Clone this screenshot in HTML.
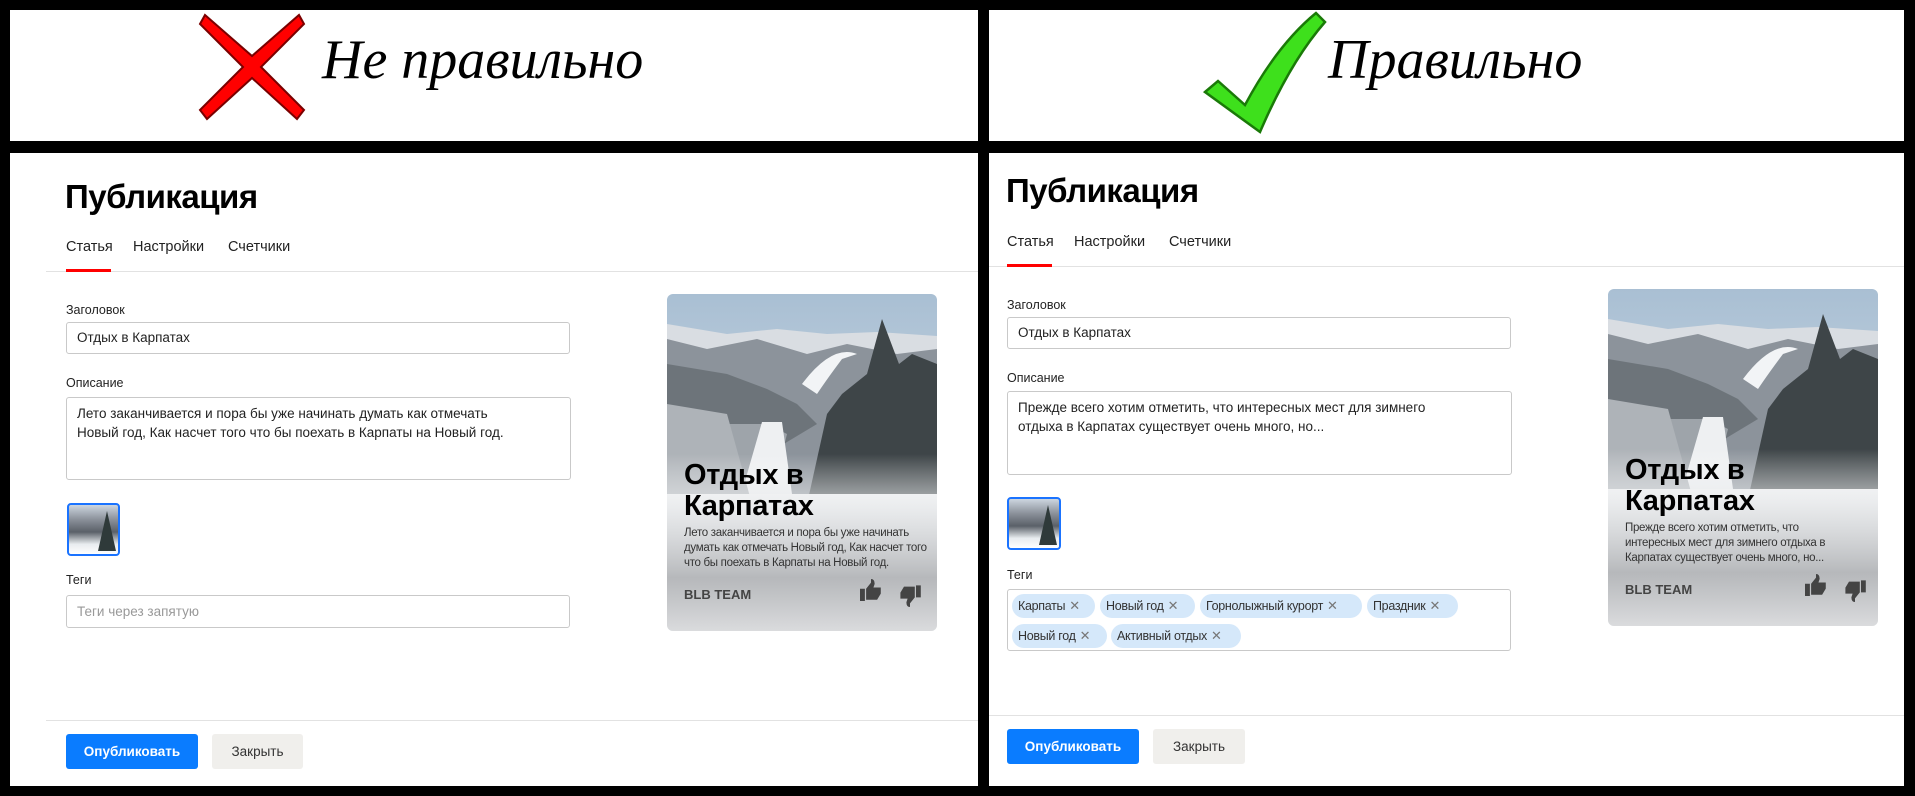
<!DOCTYPE html>
<html><head><meta charset="utf-8">
<style>
*{margin:0;padding:0;box-sizing:border-box}
body{width:1915px;height:796px;background:#000;position:relative;overflow:hidden;font-family:"Liberation Sans","DejaVu Sans",sans-serif;color:#000}
.a{position:absolute}
.wb{position:absolute;background:#fff}
.h1{font-size:33px;font-weight:bold;letter-spacing:-0.5px}
.tab{font-size:14.5px;color:#222}
.lbl{font-size:12.5px;color:#222}
.inp{position:absolute;border:1px solid #c9c9c9;border-radius:3px;background:#fff;font-size:13.5px;color:#222;padding-left:10px}
.btn{position:absolute;height:35px;border-radius:3px;font-size:13.5px;line-height:35px;text-align:center}
.card{position:absolute;width:270px;height:337px;border-radius:6px;overflow:hidden}
.ct{position:absolute;left:17px;font-size:29px;font-weight:bold;line-height:31px;letter-spacing:-0.3px;color:#000}
.cd{position:absolute;left:17px;font-size:11.5px;line-height:15px;color:#333;width:250px;letter-spacing:-0.3px}
.blb{position:absolute;left:17px;font-size:13px;font-weight:bold;color:#444}
.chip{position:absolute;height:24px;line-height:24px;border-radius:12px;background:#d5e8fa;font-size:12.5px;color:#333;padding-left:6px;letter-spacing:-0.3px;white-space:nowrap}
.chip b{font-weight:normal;color:#777;margin-left:4px;font-size:13px}
.hand{font-family:"Liberation Serif",serif;font-style:italic;font-size:56px;color:#000}
</style></head><body>

<div class="wb" style="left:10px;top:10px;width:968px;height:131px"></div>
<div class="wb" style="left:989px;top:10px;width:915px;height:131px"></div>
<div class="wb" style="left:10px;top:153px;width:968px;height:633px"></div>
<div class="wb" style="left:989px;top:153px;width:915px;height:633px"></div>

<svg class="a" style="left:197px;top:12px" width="110" height="110" viewBox="0 0 110 110">
<path d="M8 3 L55 44 L102 3 L107 12 L64 55 L107 98 L100 107 L55 66 L10 107 L3 98 L46 55 L3 12 Z" fill="#f00" stroke="#7a0000" stroke-width="2"/>
</svg>
<div class="a hand" style="left:322px;top:28px">Не правильно</div>

<svg class="a" style="left:1202px;top:10px" width="126" height="126" viewBox="0 0 126 126">
<path d="M3 82 L16 71 L43 95 Q75 35 114 3 L123 12 Q88 52 58 122 Z" fill="#3ee01c" stroke="#1a7a08" stroke-width="2.5"/>
</svg>
<div class="a hand" style="left:1328px;top:28px">Правильно</div>

<!-- LEFT PANEL -->
<div class="a h1" style="left:65px;top:178px">Публикация</div>
<div class="a tab" style="left:66px;top:239px">Статья</div>
<div class="a tab" style="left:133px;top:239px">Настройки</div>
<div class="a tab" style="left:228px;top:239px">Счетчики</div>
<div class="a" style="left:46px;top:271px;width:932px;height:1px;background:#e2e2e2"></div>
<div class="a" style="left:66px;top:269px;width:45px;height:3px;background:#f00"></div>

<div class="a lbl" style="left:66px;top:303px">Заголовок</div>
<div class="inp" style="left:66px;top:322px;width:504px;height:32px;line-height:30px">Отдых в Карпатах</div>
<div class="a lbl" style="left:66px;top:376px">Описание</div>
<div class="inp" style="left:66px;top:397px;width:505px;height:83px;line-height:19px;padding-top:6px">Лето заканчивается и пора бы уже начинать думать как отмечать<br>Новый год, Как насчет того что бы поехать в Карпаты на Новый год.</div>
<div class="a" style="left:67px;top:503px;width:53px;height:53px;border:2px solid #1a73ff;border-radius:4px;overflow:hidden;background:linear-gradient(#cdd6e0 0,#8a9099 30%,#5a6068 55%,#e8ecef 80%,#fff 100%)"><div class="a" style="right:2px;top:6px;width:18px;height:40px;background:#2f3a3a;clip-path:polygon(50% 0,100% 100%,0 100%)"></div></div>
<div class="a lbl" style="left:66px;top:573px">Теги</div>
<div class="inp" style="left:66px;top:595px;width:504px;height:33px;line-height:31px;color:#999">Теги через запятую</div>

<div class="a" style="left:46px;top:720px;width:932px;height:1px;background:#e2e2e2"></div>
<div class="btn" style="left:66px;top:734px;width:132px;background:#0a7cff;color:#fff;font-weight:bold">Опубликовать</div>
<div class="btn" style="left:212px;top:734px;width:91px;background:#f0efec;color:#333">Закрыть</div>

<div class="card" style="left:667px;top:294px">
<svg width="270" height="337" viewBox="0 0 270 337" preserveAspectRatio="none" style="position:absolute;left:0;top:0">
<defs>
<linearGradient id="sk" x1="0" y1="0" x2="0" y2="1"><stop offset="0" stop-color="#a9bfd3"/><stop offset="1" stop-color="#e4eaf0"/></linearGradient>
<linearGradient id="fd" x1="0" y1="0" x2="0" y2="1"><stop offset="0" stop-color="#fff" stop-opacity="0"/><stop offset="0.3" stop-color="#e6e8ea" stop-opacity="0.7"/><stop offset="0.7" stop-color="#b3b5b8" stop-opacity="0.95"/><stop offset="1" stop-color="#dadbdd"/></linearGradient>
</defs>
<rect width="270" height="337" fill="url(#sk)"/>
<path d="M0 30 L60 40 L110 35 L160 40 L210 38 L270 42 L270 220 L0 220Z" fill="#d9dde2"/>
<path d="M0 45 L40 55 L90 45 L140 60 L180 50 L230 60 L270 55 L270 220 L0 220Z" fill="#8c939b"/>
<path d="M0 70 L60 80 L100 95 L130 110 L150 130 L0 220Z" fill="#6d747a"/>
<path d="M135 90 Q165 50 190 60 L175 65 Q160 85 150 100Z" fill="#f2f4f6"/>
<path d="M0 130 L100 130 L120 140 L100 220 L0 220Z" fill="#9ea4aa"/>
<path d="M95 128 L115 128 L125 200 L70 215 Z" fill="#eef0f2"/>
<path d="M140 210 L160 120 L175 100 L200 80 L215 25 L232 70 L245 60 L270 70 L270 210Z" fill="#3e4548"/>
<path d="M0 110 L60 120 L85 210 L0 210Z" fill="#aeb3b8"/>
<rect y="200" width="270" height="137" fill="#f4f5f6"/>
<rect y="160" width="270" height="177" fill="url(#fd)"/>
</svg>
<div class="ct" style="top:166px">Отдых в<br>Карпатах</div>
<div class="cd" style="top:232px;width:250px">Лето заканчивается и пора бы уже начинать думать как отмечать Новый год, Как насчет того что бы поехать в Карпаты на Новый год.</div>
<div class="blb" style="top:293px">BLB TEAM</div>
<svg class="a" style="left:193px;top:285px" width="22" height="22" viewBox="0 0 18 18"><path d="M0 8h4v10H0z M5 8 L9 3 L9 0 Q12 0 12 4 L11 7 H17 L17 12 L14 17 H5Z" fill="#444"/></svg>
<svg class="a" style="left:232px;top:289px" width="22" height="24" viewBox="0 0 18 20"><g transform="rotate(180 9 10)"><path d="M0 8h4v10H0z M5 8 L9 3 L9 0 Q12 0 12 4 L11 7 H17 L17 12 L14 17 H5Z" fill="#444"/></g></svg>
</div>

<!-- RIGHT PANEL -->
<div class="a h1" style="left:1006px;top:172px">Публикация</div>
<div class="a tab" style="left:1007px;top:234px">Статья</div>
<div class="a tab" style="left:1074px;top:234px">Настройки</div>
<div class="a tab" style="left:1169px;top:234px">Счетчики</div>
<div class="a" style="left:989px;top:266px;width:915px;height:1px;background:#e2e2e2"></div>
<div class="a" style="left:1007px;top:264px;width:45px;height:3px;background:#f00"></div>

<div class="a lbl" style="left:1007px;top:298px">Заголовок</div>
<div class="inp" style="left:1007px;top:317px;width:504px;height:32px;line-height:30px">Отдых в Карпатах</div>
<div class="a lbl" style="left:1007px;top:371px">Описание</div>
<div class="inp" style="left:1007px;top:391px;width:505px;height:84px;line-height:19px;padding-top:6px">Прежде всего хотим отметить, что интересных мест для зимнего<br>отдыха в Карпатах существует очень много, но...</div>
<div class="a" style="left:1007px;top:497px;width:54px;height:53px;border:2px solid #1a73ff;border-radius:4px;overflow:hidden;background:linear-gradient(#cdd6e0 0,#8a9099 30%,#5a6068 55%,#e8ecef 80%,#fff 100%)"><div class="a" style="right:2px;top:6px;width:18px;height:40px;background:#2f3a3a;clip-path:polygon(50% 0,100% 100%,0 100%)"></div></div>
<div class="a lbl" style="left:1007px;top:568px">Теги</div>
<div class="inp" style="left:1007px;top:589px;width:504px;height:62px"></div>
<div class="chip" style="left:1012px;top:594px;width:83px">Карпаты<b>✕</b></div>
<div class="chip" style="left:1100px;top:594px;width:95px">Новый год<b>✕</b></div>
<div class="chip" style="left:1200px;top:594px;width:162px">Горнолыжный курорт<b>✕</b></div>
<div class="chip" style="left:1367px;top:594px;width:91px">Праздник<b>✕</b></div>
<div class="chip" style="left:1012px;top:624px;width:95px">Новый год<b>✕</b></div>
<div class="chip" style="left:1111px;top:624px;width:130px">Активный отдых<b>✕</b></div>

<div class="a" style="left:989px;top:715px;width:915px;height:1px;background:#e2e2e2"></div>
<div class="btn" style="left:1007px;top:729px;width:132px;background:#0a7cff;color:#fff;font-weight:bold">Опубликовать</div>
<div class="btn" style="left:1153px;top:729px;width:92px;background:#f0efec;color:#333">Закрыть</div>

<div class="card" style="left:1608px;top:289px">
<svg width="270" height="337" viewBox="0 0 270 337" preserveAspectRatio="none" style="position:absolute;left:0;top:0">
<defs>
<linearGradient id="sk2" x1="0" y1="0" x2="0" y2="1"><stop offset="0" stop-color="#a9bfd3"/><stop offset="1" stop-color="#e4eaf0"/></linearGradient>
<linearGradient id="fd2" x1="0" y1="0" x2="0" y2="1"><stop offset="0" stop-color="#fff" stop-opacity="0"/><stop offset="0.3" stop-color="#e6e8ea" stop-opacity="0.7"/><stop offset="0.7" stop-color="#b3b5b8" stop-opacity="0.95"/><stop offset="1" stop-color="#dadbdd"/></linearGradient>
</defs>
<rect width="270" height="337" fill="url(#sk2)"/>
<path d="M0 30 L60 40 L110 35 L160 40 L210 38 L270 42 L270 220 L0 220Z" fill="#d9dde2"/>
<path d="M0 45 L40 55 L90 45 L140 60 L180 50 L230 60 L270 55 L270 220 L0 220Z" fill="#8c939b"/>
<path d="M0 70 L60 80 L100 95 L130 110 L150 130 L0 220Z" fill="#6d747a"/>
<path d="M135 90 Q165 50 190 60 L175 65 Q160 85 150 100Z" fill="#f2f4f6"/>
<path d="M0 130 L100 130 L120 140 L100 220 L0 220Z" fill="#9ea4aa"/>
<path d="M95 128 L115 128 L125 200 L70 215 Z" fill="#eef0f2"/>
<path d="M140 210 L160 120 L175 100 L200 80 L215 25 L232 70 L245 60 L270 70 L270 210Z" fill="#3e4548"/>
<path d="M0 110 L60 120 L85 210 L0 210Z" fill="#aeb3b8"/>
<rect y="200" width="270" height="137" fill="#f4f5f6"/>
<rect y="160" width="270" height="177" fill="url(#fd2)"/>
</svg>
<div class="ct" style="top:166px">Отдых в<br>Карпатах</div>
<div class="cd" style="top:232px;width:215px">Прежде всего хотим отметить, что интересных мест для зимнего отдыха в Карпатах существует очень много, но...</div>
<div class="blb" style="top:293px">BLB TEAM</div>
<svg class="a" style="left:197px;top:285px" width="22" height="22" viewBox="0 0 18 18"><path d="M0 8h4v10H0z M5 8 L9 3 L9 0 Q12 0 12 4 L11 7 H17 L17 12 L14 17 H5Z" fill="#444"/></svg>
<svg class="a" style="left:236px;top:289px" width="22" height="24" viewBox="0 0 18 20"><g transform="rotate(180 9 10)"><path d="M0 8h4v10H0z M5 8 L9 3 L9 0 Q12 0 12 4 L11 7 H17 L17 12 L14 17 H5Z" fill="#444"/></g></svg>
</div>

</body></html>
